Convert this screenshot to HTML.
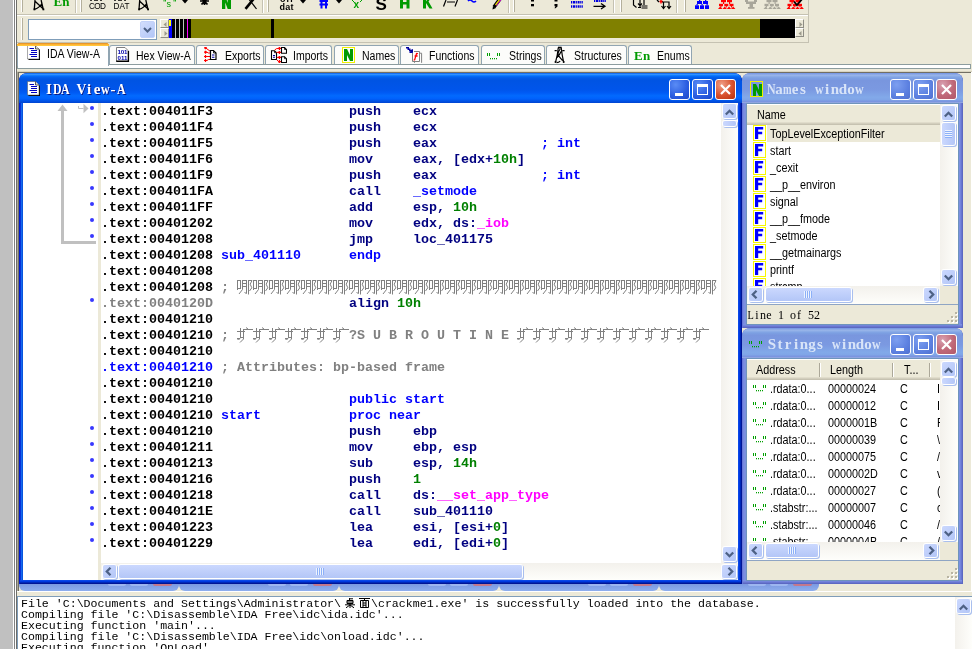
<!DOCTYPE html>
<html><head><meta charset="utf-8"><title>IDA</title>
<style>
*{box-sizing:border-box;margin:0;padding:0}
html,body{width:972px;height:649px;overflow:hidden;background:#ece9d8;font-family:"Liberation Sans",sans-serif;font-size:11px;color:#000}
div,span,svg{position:absolute}
.m{font-family:"Liberation Mono",monospace;font-weight:bold;font-size:13.33px;line-height:16px;white-space:pre;height:16px}
.nv{color:#000080}.bl{color:#0000ff}.gn{color:#008000}.mg{color:#ff00ff}.gy{color:#808080}.bk{color:#000}
.tb{height:22px;line-height:22px;white-space:pre;font-size:11px}
.tab{top:45px;height:19px;padding-top:0;background:#fcfcfa;border:1px solid #91a5b2;border-bottom:none;border-radius:3px 3px 0 0;font-size:11px;line-height:18px;white-space:pre}
.tab i{position:absolute;font-style:normal;top:1px;font-size:12px;transform:scaleX(.875);transform-origin:0 0}
.win{border-radius:8px 8px 0 0}
.tbtn{width:21px;height:21px;border:1px solid #fff;border-radius:3px}
.sbtn{width:16px;height:16px;border:1px solid #fff;border-radius:3px;background:linear-gradient(135deg,#cfdcfd,#b4c8f8);box-shadow:inset 0 0 0 1px #b7caf5}
.thumb{border:1px solid #fff;border-radius:3px;background:linear-gradient(180deg,#cad8fd,#bccdfb);box-shadow:inset 0 0 0 1px #b7caf5}
.thumbv{border:1px solid #fff;border-radius:3px;background:linear-gradient(90deg,#cad8fd,#bccdfb);box-shadow:inset 0 0 0 1px #b7caf5}
.trackv{background:linear-gradient(90deg,#f3f1ec,#fefefb)}
.trackh{background:linear-gradient(180deg,#f3f1ec,#fefefb)}
.lst{font-size:12px;line-height:17px;height:17px;margin-top:1px;white-space:pre;transform:scaleX(.9);transform-origin:0 0}
.hd{font-size:12px;line-height:20px;white-space:pre;transform:scaleX(.9);transform-origin:0 0}
.out{font-family:"Liberation Mono",monospace;font-size:11.6px;line-height:11px;height:11px;white-space:pre;color:#000}
</style></head>
<body>
<div id="root" style="left:0;top:0;width:972px;height:649px;will-change:transform">
<div style="left:0px;top:0px;width:13px;height:649px;background:#c0c0c0"></div>
<div style="left:13px;top:0px;width:1px;height:649px;background:#fff"></div>
<div style="left:14px;top:0px;width:1px;height:649px;background:#808080"></div>
<div style="left:15px;top:0px;width:1px;height:649px;background:#fff"></div>
<div style="left:16px;top:0px;width:1px;height:649px;background:#6e6e6a"></div>
<div style="left:17px;top:14px;width:791px;height:1px;background:#c5c2b2"></div>
<div style="left:17px;top:15px;width:791px;height:1px;background:#fff"></div>
<div style="left:17px;top:42px;width:791px;height:1px;background:#c5c2b2"></div>
<div style="left:808px;top:0px;width:1px;height:43px;background:#c5c2b2"></div>
<div style="left:28px;top:19px;width:129px;height:21px;background:#fff;border:1px solid #7f9db9"></div>
<div style="left:140px;top:21px;width:15px;height:17px;border-radius:2px;background:linear-gradient(135deg,#d3defc,#b2c6f7);border:1px solid #c3d2f9"><svg style="left:2px;top:4.5px" width="9" height="6" viewBox="0 0 9 6"><path d="M1 1 L4.5 4.5 L8 1" fill="none" stroke="#4d6185" stroke-width="2"/></svg></div>
<div style="left:160px;top:19px;width:9px;height:9px;background:#ece9d8;border:1px solid #fff;border-right-color:#8e8d84;border-bottom-color:#8e8d84"><svg style="left:1.5px;top:1.5px" width="4" height="5" viewBox="0 0 4 5"><path d="M3.5 0 L0.5 2.5 L3.5 5 Z" fill="#9c9a8c"/></svg></div>
<div style="left:160px;top:28px;width:9px;height:10px;background:#ece9d8;border:1px solid #fff;border-right-color:#8e8d84;border-bottom-color:#8e8d84"><svg style="left:2.5px;top:1.5px" width="4" height="5" viewBox="0 0 4 5"><path d="M0.5 0 L3.5 2.5 L0.5 5 Z" fill="#9c9a8c"/></svg></div>
<div style="left:169px;top:19px;width:626px;height:19px;background:#808000"></div>
<div style="left:169px;top:19px;width:3px;height:19px;background:#0000ff"></div>
<div style="left:169px;top:20px;width:2px;height:6px;background:#ffff00"></div>
<div style="left:172px;top:19px;width:19px;height:19px;background:#000"></div>
<div style="left:175px;top:19px;width:1px;height:19px;background:#c0c0c0"></div>
<div style="left:179px;top:19px;width:1px;height:19px;background:#c0c0c0"></div>
<div style="left:183px;top:19px;width:1px;height:19px;background:#c0c0c0"></div>
<div style="left:187px;top:19px;width:1px;height:19px;background:#ff00ff"></div>
<div style="left:271px;top:19px;width:3px;height:19px;background:#000"></div>
<div style="left:760px;top:19px;width:35px;height:19px;background:#000"></div>
<div style="left:795px;top:19px;width:9px;height:9px;background:#ece9d8;border:1px solid #fff;border-right-color:#8e8d84;border-bottom-color:#8e8d84"><svg style="left:2.5px;top:1.5px" width="4" height="5" viewBox="0 0 4 5"><path d="M0.5 0 L3.5 2.5 L0.5 5 Z" fill="#9c9a8c"/></svg></div>
<div style="left:795px;top:28px;width:9px;height:9px;background:#ece9d8;border:1px solid #fff;border-right-color:#8e8d84;border-bottom-color:#8e8d84"><svg style="left:1.5px;top:1.5px" width="4" height="5" viewBox="0 0 4 5"><path d="M3.5 0 L0.5 2.5 L3.5 5 Z" fill="#9c9a8c"/></svg></div>
<div style="left:17px;top:64px;width:954px;height:5px;background:#fff;border:1px solid #8c9c9e"></div>
<div class="tab" style="left:109px;width:86px"><svg style="left:6px;top:1px" width="15" height="16" viewBox="0 0 15 16"><path d="M0.5 0.5 H9 L12.5 4 V14 H0.5 Z" fill="#fff"/><path d="M0.5 14 V0.5 H9 L12.5 4" fill="none" stroke="#707070" stroke-width="0.9"/><path d="M12.4 4 V14.3 H0.2" fill="none" stroke="#000" stroke-width="1.4"/><text x="1.6" y="7" font-family="Liberation Sans" font-weight="bold" font-size="6.2" fill="#0000a8" textLength="9.8">101</text><text x="1.6" y="12.8" font-family="Liberation Sans" font-weight="bold" font-size="6.2" fill="#0000a8" textLength="9.8">011</text></svg><i style="left:25.5px">Hex View-A</i></div>
<div class="tab" style="left:196px;width:68px"><svg style="left:7px;top:1px" width="14" height="16" viewBox="0 0 14 16"><g stroke="#ff0000" stroke-width="1" fill="none"><path d="M1.5 0.8 L6.5 4.5 M1.5 5.2 H3 L4.5 6 H6.5 M1.5 9.5 H6.5 M1.5 13.5 H3 L4.5 12.5 H6.5"/><path d="M0 0.8 H3 M1.5 -0.7 V2.3 M0 5.2 H3 M1.5 3.7 V6.7 M0 9.5 H3 M1.5 8 V11 M0 13.5 H3 M1.5 12 V15" stroke-width="1.2"/></g><path d="M6.5 3.5 H9.5 L12 6 V12.5 H6.5 Z" fill="#fff" stroke="#000" stroke-width="1.2"/><path d="M9.5 3.5 V6 H12" fill="none" stroke="#000" stroke-width="0.8"/><path d="M8 8 h2.5 M8 10.3 h2.5" stroke="#0000a0" stroke-width="1.1"/></svg><i style="left:27.5px">Exports</i></div>
<div class="tab" style="left:265px;width:67px"><svg style="left:4px;top:1px" width="17" height="17" viewBox="0 0 17 17"><path d="M1.5 3.7 H4.5 L6.5 5.7 V12.5 H1.5 Z" fill="#fff" stroke="#000" stroke-width="1.1"/><path d="M4.5 3.7 V5.7 H6.5" fill="none" stroke="#000" stroke-width="0.8"/><path d="M3 8.5 h2 M3 10.3 h2" stroke="#0000a0" stroke-width="1.1"/><g stroke="#ff0000" fill="none"><path d="M4.5 3.2 L6.5 1.6 L11 1.4 M6.5 5.4 H11 M6.8 10.4 H11 M6.8 12.8 L8.5 14.6 H11" stroke-width="1"/><path d="M9.4 -0.2 V3 M8 1.4 H10.8 M9.4 3.9 V6.9 M8 5.4 H10.8 M9.4 8.9 V11.9 M8 10.4 H10.8 M9.4 13.1 V16.1 M8 14.6 H10.8" stroke-width="1.2"/></g><path d="M11.5 0.5 H14.5 L16.5 2.5 V6.3 H11.5 Z" fill="#fff" stroke="#000" stroke-width="1.1"/><path d="M14.5 0.5 V2.5 H16.5" fill="none" stroke="#000" stroke-width="0.8"/><path d="M11.5 9.7 H14.5 L16.5 11.7 V15.5 H11.5 Z" fill="#fff" stroke="#000" stroke-width="1.1"/><path d="M14.5 9.7 V11.7 H16.5" fill="none" stroke="#000" stroke-width="0.8"/></svg><i style="left:27px">Imports</i></div>
<div class="tab" style="left:333.5px;width:65px"><svg style="left:7px;top:1px" width="13" height="16" viewBox="0 0 13 16"><rect x="0.5" y="0.5" width="12" height="15" fill="none" stroke="#f0f000" stroke-width="1"/><path d="M2 2 H5 L8 8 V2 H11 V14 H8 L5 8 V14 H2 Z" fill="#009a00"/></svg><i style="left:27px">Names</i></div>
<div class="tab" style="left:400px;width:79px"><svg style="left:4px;top:0px" width="18" height="18" viewBox="0 0 18 18"><path d="M1 1 H4 V2.5 H5.5 V4 L8 3 V7 H4 L5.5 5.5 H4 V4 H2.5 V2.5 H1 Z" fill="#0000a0"/><path d="M14.8 7.2 H16.6 V16.8 M9.5 15.6 V16.8" fill="none" stroke="#808080" stroke-width="1"/><path d="M7.5 7 V15.5 H14.5 V5.5 H9" fill="#fff" stroke="#808080" stroke-width="1"/><path d="M12.8 8 Q11.6 6.6 11.2 8.6 L9.8 13.4 Q9.4 14.4 8.8 13.6 M9.6 10 H12.6" fill="none" stroke="#ff0000" stroke-width="1.3"/></svg><i style="left:27.5px">Functions</i></div>
<div class="tab" style="left:480.5px;width:64px"><svg style="left:5px;top:7px" width="15" height="7" viewBox="0 0 15 7"><g fill="#00a000"><rect x="0" y="0" width="1" height="3"/><rect x="2" y="0" width="1" height="3"/><rect x="10" y="0" width="1" height="3"/><rect x="12" y="0" width="1" height="3"/><rect x="3" y="5" width="1" height="1.3"/><rect x="5" y="5" width="1" height="1.3"/><rect x="7" y="5" width="1" height="1.3"/><rect x="9" y="5" width="1" height="1.3"/></g></svg><i style="left:27.2px">Strings</i></div>
<div class="tab" style="left:546px;width:81px"><svg style="left:7px;top:0px" width="12" height="18" viewBox="0 0 12 18"><g fill="none" stroke="#000" stroke-width="1.2"><path d="M4 1.6 H7.6" stroke-width="1.8"/><path d="M0.6 4.6 H2.8 M8.4 4.6 H10.6 M4.3 1.5 Q3.6 9 1.6 16 M7.2 1.5 Q8 9 9.6 16 M6.2 3 Q3.4 7 4.2 9.5 L8.6 14.6 M7 5.5 Q6 8.5 3 11.5 M2.6 16.6 Q4.8 16.6 6.2 15.2"/></g><circle cx="1.5" cy="16.1" r="1"/><circle cx="9.7" cy="16.1" r="1"/></svg><i style="left:27.4px">Structures</i></div>
<div class="tab" style="left:628px;width:64px"><span style="left:5px;top:1px;font-family:'Liberation Serif',serif;font-weight:bold;font-size:13px;line-height:18px;color:#009a00;letter-spacing:0.3px">En</span><i style="left:27.7px">Enums</i></div>
<div class="tab" style="left:17px;top:43px;width:92px;height:23px;background:#fff;border-top:3px solid #ffb834"><svg style="left:9px;top:-1.5px" width="14" height="16" viewBox="0 0 14 16"><path d="M1.5 1.5 H9.5 L13 5 V15 H1.5 Z" fill="#000"/><path d="M0.5 0.5 H8.5 L12 4 V14 H0.5 Z" fill="#fff" stroke="#000" stroke-width="0"/><path d="M0.5 0.5 H8.5 L12 4 V14 H0.5 Z" fill="none" stroke="#555" stroke-width="0.5"/><path d="M8.5 0.5 V4 H12" fill="#ddd" stroke="#000" stroke-width="0.6"/><path d="M2.5 3.5 H7 M4 5.5 H10 M4 7.5 H10 M2.5 9.5 H10 M4 11.5 H10" stroke="#0000c0" stroke-width="1"/></svg><i style="left:29px;top:-1px">IDA View-A</i></div>
<div style="left:18px;top:43px;width:90px;height:1px;background:#e5972d;border-radius:2px 2px 0 0"></div>
<div style="left:17px;top:44px;width:92px;height:1px;background:#ffb232"></div>
<div style="left:17px;top:45px;width:92px;height:1px;background:#ffc73c"></div>
<div style="left:21px;top:18px;width:1px;height:22px;background:#fff"></div>
<div style="left:22px;top:18px;width:1px;height:22px;background:#b4b09c"></div>
<div style="left:17px;top:71px;width:955px;height:1px;background:#d8d4c0"></div>
<div style="left:17px;top:72px;width:954px;height:1px;background:#716f64"></div>
<div style="left:17px;top:72px;width:1px;height:520px;background:#aca899"></div>
<div style="left:18px;top:72px;width:1px;height:519px;background:#716f64"></div>
<div style="left:971px;top:72px;width:1px;height:520px;background:#fff"></div>
<div class="win" style="left:19px;top:73px;width:723px;height:511px;background:#0831d9;overflow:hidden">
<div style="left:0;top:0;width:4px;height:511px;background:linear-gradient(90deg,#0019cf 0%,#0019cf 25%,#0831d9 25%,#0831d9 50%,#166aee 50%,#166aee 75%,#0855dd 75%,#0855dd 100%)"></div>
<div style="left:719px;top:0;width:4px;height:511px;background:linear-gradient(90deg,#0a48e8 0%,#0a48e8 25%,#0038e0 25%,#0038e0 50%,#0028b8 50%,#0028b8 75%,#001496 75%,#001496 100%)"></div>
<div style="left:1px;top:507px;width:721px;height:4px;background:linear-gradient(180deg,#0a48e8 0%,#0a48e8 25%,#0038e0 25%,#0038e0 50%,#0028b8 50%,#0028b8 75%,#001496 75%,#001496 100%)"></div>
<div style="left:0;top:0;width:723px;height:30px;border-radius:8px 8px 0 0;background:linear-gradient(180deg,#0058ee 0%,#3593ff 4%,#288eff 6%,#127dff 8%,#036ffc 10%,#0262ee 14%,#0057e5 20%,#0054e3 24%,#0055eb 56%,#005bf5 66%,#026afe 76%,#0061fc 86%,#0144d0 100%)"></div>
</div>
<div class="win" style="left:742px;top:73px;width:221px;height:255px;background:#6a7fd6;overflow:hidden">
<div style="left:0;top:0;width:4px;height:255px;background:linear-gradient(90deg,#6878d8 0%,#6878d8 25%,#7888e0 25%,#7888e0 50%,#7b8fe0 50%,#7b8fe0 75%,#7a8fdf 75%,#7a8fdf 100%)"></div>
<div style="left:217px;top:0;width:4px;height:255px;background:linear-gradient(90deg,#7b90e2 0%,#7b90e2 25%,#7484dc 25%,#7484dc 50%,#6876d0 50%,#6876d0 75%,#5c68c2 75%,#5c68c2 100%)"></div>
<div style="left:1px;top:251px;width:219px;height:4px;background:linear-gradient(180deg,#7b90e2 0%,#7b90e2 25%,#7484dc 25%,#7484dc 50%,#6876d0 50%,#6876d0 75%,#5c68c2 75%,#5c68c2 100%)"></div>
<div style="left:0;top:0;width:221px;height:30px;border-radius:8px 8px 0 0;background:linear-gradient(180deg,#7697e7 0%,#7e9ee3 3%,#94afe8 6%,#97b4e9 8%,#82a5e4 14%,#7c9fe2 17%,#7996de 25%,#7b99e1 56%,#82a9e9 81%,#80a5e7 89%,#7b96e1 94%,#7a93df 97%,#abbae3 100%)"></div>
</div>
<div class="win" style="left:742px;top:328px;width:221px;height:256px;background:#6a7fd6;overflow:hidden">
<div style="left:0;top:0;width:4px;height:256px;background:linear-gradient(90deg,#6878d8 0%,#6878d8 25%,#7888e0 25%,#7888e0 50%,#7b8fe0 50%,#7b8fe0 75%,#7a8fdf 75%,#7a8fdf 100%)"></div>
<div style="left:217px;top:0;width:4px;height:256px;background:linear-gradient(90deg,#7b90e2 0%,#7b90e2 25%,#7484dc 25%,#7484dc 50%,#6876d0 50%,#6876d0 75%,#5c68c2 75%,#5c68c2 100%)"></div>
<div style="left:1px;top:252px;width:219px;height:4px;background:linear-gradient(180deg,#7b90e2 0%,#7b90e2 25%,#7484dc 25%,#7484dc 50%,#6876d0 50%,#6876d0 75%,#5c68c2 75%,#5c68c2 100%)"></div>
<div style="left:0;top:0;width:221px;height:30px;border-radius:8px 8px 0 0;background:linear-gradient(180deg,#7697e7 0%,#7e9ee3 3%,#94afe8 6%,#97b4e9 8%,#82a5e4 14%,#7c9fe2 17%,#7996de 25%,#7b99e1 56%,#82a9e9 81%,#80a5e7 89%,#7b96e1 94%,#7a93df 97%,#abbae3 100%)"></div>
</div>
<div style="left:23px;top:103px;width:715px;height:477px;background:#fff"></div>
<div style="left:98px;top:103px;width:3px;height:477px;background:#ece9d8"></div>
<div class="tbtn" style="left:669px;top:79px;width:21px;height:21px;background:radial-gradient(circle at 30% 25%,#5a8cf5 0%,#2a5ce0 60%,#1d47c8 100%)"><div style="left:5px;top:13px;width:8px;height:3px;background:#fff"></div></div>
<div class="tbtn" style="left:692px;top:79px;width:21px;height:21px;background:radial-gradient(circle at 30% 25%,#5a8cf5 0%,#2a5ce0 60%,#1d47c8 100%)"><div style="left:4px;top:4px;width:11px;height:11px;border:1px solid #fff;border-top-width:3px"></div></div>
<div class="tbtn" style="left:715px;top:79px;width:21px;height:21px;background:radial-gradient(circle at 30% 25%,#f0a088 0%,#d8502c 55%,#b8300c 100%)"><svg style="left:4px;top:4px" width="11" height="11" viewBox="0 0 11 11"><path d="M1 1 L10 10 M10 1 L1 10" stroke="#fff" stroke-width="2.2" fill="none"/></svg></div>
<div style="left:45px;top:80px;width:80px;height:18px;font-family:'Liberation Serif',serif;font-weight:bold;font-size:15px;line-height:18px;color:#fff;text-shadow:1px 1px 0 #0a1883;white-space:pre">
<span style="left:1.08px;top:0;width:5.84px;">I</span>
<span style="left:6.58px;top:0;width:10.84px;transform:scaleX(0.793);transform-origin:50% 50%;">D</span>
<span style="left:14.58px;top:0;width:10.84px;transform:scaleX(0.793);transform-origin:50% 50%;">A</span>
<span style="left:31.27px;top:0;width:9.47px;transform:scaleX(0.908);transform-origin:50% 50%;">V</span>
<span style="left:41.91px;top:0;width:4.17px;">i</span>
<span style="left:48.66px;top:0;width:6.67px;">e</span>
<span style="left:54.58px;top:0;width:10.84px;transform:scaleX(0.793);transform-origin:50% 50%;">w</span>
<span style="left:65.50px;top:0;width:5px;">-</span>
<span style="left:70.58px;top:0;width:10.84px;transform:scaleX(0.793);transform-origin:50% 50%;">A</span>
</div>
<div class="trackv" style="left:721px;top:103px;width:17px;height:460px;"></div>
<div style="left:723px;top:104px;width:13px;height:13.5px;border-radius:2px;background:linear-gradient(135deg,#cbd8fe,#b3c6f7);box-shadow:0 0 0 1px #fff,1px 1px 0 1px #a9bfee"><svg style="left:2px;top:4.5px" width="9" height="7" viewBox="0 0 9 7"><path d="M0.8 5.5 L4.5 1.8 L8.2 5.5" fill="none" stroke="#4d6185" stroke-width="2.3"/></svg></div>
<div style="left:723px;top:547px;width:13px;height:13.5px;border-radius:2px;background:linear-gradient(135deg,#cbd8fe,#b3c6f7);box-shadow:0 0 0 1px #fff,1px 1px 0 1px #a9bfee"><svg style="left:2px;top:3.5px" width="9" height="7" viewBox="0 0 9 7"><path d="M0.8 1.5 L4.5 5.2 L8.2 1.5" fill="none" stroke="#4d6185" stroke-width="2.3"/></svg></div>
<div style="left:723px;top:121px;width:13px;height:5px;border-radius:2px;background:linear-gradient(90deg,#cbd8fe,#b3c6f7);box-shadow:0 0 0 1px #fff,1px 1px 0 1px #a9bfee"></div>
<div class="trackh" style="left:101px;top:563px;width:637px;height:17px;"></div>
<div style="left:102.5px;top:565px;width:13.5px;height:13px;border-radius:2px;background:linear-gradient(135deg,#cbd8fe,#b3c6f7);box-shadow:0 0 0 1px #fff,1px 1px 0 1px #a9bfee"><svg style="left:2.5px;top:2px" width="7" height="9" viewBox="0 0 7 9"><path d="M5.5 0.8 L1.8 4.5 L5.5 8.2" fill="none" stroke="#4d6185" stroke-width="2.3"/></svg></div>
<div style="left:722.0px;top:565px;width:13.5px;height:13px;border-radius:2px;background:linear-gradient(135deg,#cbd8fe,#b3c6f7);box-shadow:0 0 0 1px #fff,1px 1px 0 1px #a9bfee"><svg style="left:4.5px;top:2px" width="7" height="9" viewBox="0 0 7 9"><path d="M1.5 0.8 L5.2 4.5 L1.5 8.2" fill="none" stroke="#4d6185" stroke-width="2.3"/></svg></div>
<div style="left:119px;top:565px;width:403px;height:13px;border-radius:2px;background:linear-gradient(180deg,#cbd8fe,#b3c6f7);box-shadow:0 0 0 1px #fff,1px 1px 0 1px #a9bfee"><div style="left:197px;top:3px;width:8px;height:7px;background:repeating-linear-gradient(90deg,#eef3fe 0,#eef3fe 1px,#8cb0f8 1px,#8cb0f8 2px)"></div></div>
<span class="m bk" style="left:101px;top:104px">.text:004011F3</span>
<span class="m nv" style="left:349px;top:104px">push</span>
<span class="m nv" style="left:413px;top:104px">ecx</span>
<div style="left:90px;top:106px;width:4px;height:4px;background:#3838ff;border-radius:50%"></div>
<span class="m bk" style="left:101px;top:120px">.text:004011F4</span>
<span class="m nv" style="left:349px;top:120px">push</span>
<span class="m nv" style="left:413px;top:120px">ecx</span>
<div style="left:90px;top:122px;width:4px;height:4px;background:#3838ff;border-radius:50%"></div>
<span class="m bk" style="left:101px;top:136px">.text:004011F5</span>
<span class="m nv" style="left:349px;top:136px">push</span>
<span class="m nv" style="left:413px;top:136px">eax</span>
<span class="m bl" style="left:541px;top:136px">; int</span>
<div style="left:90px;top:138px;width:4px;height:4px;background:#3838ff;border-radius:50%"></div>
<span class="m bk" style="left:101px;top:152px">.text:004011F6</span>
<span class="m nv" style="left:349px;top:152px">mov</span>
<span class="m nv" style="left:413px;top:152px">eax, [edx+</span>
<span class="m gn" style="left:493px;top:152px">10h</span>
<span class="m nv" style="left:517px;top:152px">]</span>
<div style="left:90px;top:154px;width:4px;height:4px;background:#3838ff;border-radius:50%"></div>
<span class="m bk" style="left:101px;top:168px">.text:004011F9</span>
<span class="m nv" style="left:349px;top:168px">push</span>
<span class="m nv" style="left:413px;top:168px">eax</span>
<span class="m bl" style="left:541px;top:168px">; int</span>
<div style="left:90px;top:170px;width:4px;height:4px;background:#3838ff;border-radius:50%"></div>
<span class="m bk" style="left:101px;top:184px">.text:004011FA</span>
<span class="m nv" style="left:349px;top:184px">call</span>
<span class="m bl" style="left:413px;top:184px">_setmode</span>
<div style="left:90px;top:186px;width:4px;height:4px;background:#3838ff;border-radius:50%"></div>
<span class="m bk" style="left:101px;top:200px">.text:004011FF</span>
<span class="m nv" style="left:349px;top:200px">add</span>
<span class="m nv" style="left:413px;top:200px">esp, </span>
<span class="m gn" style="left:453px;top:200px">10h</span>
<div style="left:90px;top:202px;width:4px;height:4px;background:#3838ff;border-radius:50%"></div>
<span class="m bk" style="left:101px;top:216px">.text:00401202</span>
<span class="m nv" style="left:349px;top:216px">mov</span>
<span class="m nv" style="left:413px;top:216px">edx, ds:</span>
<span class="m mg" style="left:477px;top:216px">_iob</span>
<div style="left:90px;top:218px;width:4px;height:4px;background:#3838ff;border-radius:50%"></div>
<span class="m bk" style="left:101px;top:232px">.text:00401208</span>
<span class="m nv" style="left:349px;top:232px">jmp</span>
<span class="m nv" style="left:413px;top:232px">loc_401175</span>
<div style="left:90px;top:234px;width:4px;height:4px;background:#3838ff;border-radius:50%"></div>
<span class="m bk" style="left:101px;top:248px">.text:00401208</span>
<span class="m bl" style="left:221px;top:248px">sub_401110</span>
<span class="m bl" style="left:349px;top:248px">endp</span>
<span class="m bk" style="left:101px;top:264px">.text:00401208</span>
<span class="m bk" style="left:101px;top:280px">.text:00401208</span>
<span class="m gy" style="left:221px;top:280px">;</span>
<span class="m gy" style="left:101px;top:296px">.text:0040120D</span>
<span class="m nv" style="left:349px;top:296px">align </span>
<span class="m gn" style="left:397px;top:296px">10h</span>
<div style="left:90px;top:298px;width:4px;height:4px;background:#3838ff;border-radius:50%"></div>
<span class="m bk" style="left:101px;top:312px">.text:00401210</span>
<span class="m bk" style="left:101px;top:328px">.text:00401210</span>
<span class="m gy" style="left:221px;top:328px">;</span>
<span class="m gy" style="left:349px;top:328px">?S U B R O U T I N E</span>
<span class="m bk" style="left:101px;top:344px">.text:00401210</span>
<span class="m bl" style="left:101px;top:360px">.text:00401210</span>
<span class="m gy" style="left:221px;top:360px">; Attributes: bp-based frame</span>
<span class="m bk" style="left:101px;top:376px">.text:00401210</span>
<span class="m bk" style="left:101px;top:392px">.text:00401210</span>
<span class="m bl" style="left:349px;top:392px">public start</span>
<span class="m bk" style="left:101px;top:408px">.text:00401210</span>
<span class="m bl" style="left:221px;top:408px">start</span>
<span class="m bl" style="left:349px;top:408px">proc near</span>
<span class="m bk" style="left:101px;top:424px">.text:00401210</span>
<span class="m nv" style="left:349px;top:424px">push</span>
<span class="m nv" style="left:413px;top:424px">ebp</span>
<div style="left:90px;top:426px;width:4px;height:4px;background:#3838ff;border-radius:50%"></div>
<span class="m bk" style="left:101px;top:440px">.text:00401211</span>
<span class="m nv" style="left:349px;top:440px">mov</span>
<span class="m nv" style="left:413px;top:440px">ebp, esp</span>
<div style="left:90px;top:442px;width:4px;height:4px;background:#3838ff;border-radius:50%"></div>
<span class="m bk" style="left:101px;top:456px">.text:00401213</span>
<span class="m nv" style="left:349px;top:456px">sub</span>
<span class="m nv" style="left:413px;top:456px">esp, </span>
<span class="m gn" style="left:453px;top:456px">14h</span>
<div style="left:90px;top:458px;width:4px;height:4px;background:#3838ff;border-radius:50%"></div>
<span class="m bk" style="left:101px;top:472px">.text:00401216</span>
<span class="m nv" style="left:349px;top:472px">push</span>
<span class="m gn" style="left:413px;top:472px">1</span>
<div style="left:90px;top:474px;width:4px;height:4px;background:#3838ff;border-radius:50%"></div>
<span class="m bk" style="left:101px;top:488px">.text:00401218</span>
<span class="m nv" style="left:349px;top:488px">call</span>
<span class="m nv" style="left:413px;top:488px">ds:</span>
<span class="m mg" style="left:437px;top:488px">__set_app_type</span>
<div style="left:90px;top:490px;width:4px;height:4px;background:#3838ff;border-radius:50%"></div>
<span class="m bk" style="left:101px;top:504px">.text:0040121E</span>
<span class="m nv" style="left:349px;top:504px">call</span>
<span class="m nv" style="left:413px;top:504px">sub_401110</span>
<div style="left:90px;top:506px;width:4px;height:4px;background:#3838ff;border-radius:50%"></div>
<span class="m bk" style="left:101px;top:520px">.text:00401223</span>
<span class="m nv" style="left:349px;top:520px">lea</span>
<span class="m nv" style="left:413px;top:520px">esi, [esi+</span>
<span class="m gn" style="left:493px;top:520px">0</span>
<span class="m nv" style="left:501px;top:520px">]</span>
<div style="left:90px;top:522px;width:4px;height:4px;background:#3838ff;border-radius:50%"></div>
<span class="m bk" style="left:101px;top:536px">.text:00401229</span>
<span class="m nv" style="left:349px;top:536px">lea</span>
<span class="m nv" style="left:413px;top:536px">edi, [edi+</span>
<span class="m gn" style="left:493px;top:536px">0</span>
<span class="m nv" style="left:501px;top:536px">]</span>
<div style="left:90px;top:538px;width:4px;height:4px;background:#3838ff;border-radius:50%"></div>
<svg style="left:0;top:0" width="0" height="0"><defs><pattern id="pna" width="16" height="16" patternUnits="userSpaceOnUse"><g fill="none" stroke="#808080" stroke-width="1"><path d="M0.5 1 V11 M3.5 1 V10 M0 1.5 H4 M0 9.5 H4 M5.5 1 V10.5 L2 15 M9.5 1 V14.5 L7.5 13.5 M5 1.5 H10 M5 4.5 H10 M5 7.5 H10 M11.5 1 V15.5 M11 1.5 H15 L13.2 5.2 L14.8 8.8 L12.5 12" /></g></pattern><pattern id="pku" width="16" height="16" patternUnits="userSpaceOnUse"><g fill="none" stroke="#808080" stroke-width="1"><path d="M0 4.5 H8 M3.5 1 V11 M6.5 2 V12 M3 10.5 H7 M6 2.5 H16 M9 0.5 L11 2 M0 11.5 H3 L1.5 13 Z M6.5 12 L3 15.5" /></g></pattern></defs></svg>
<svg style="left:237px;top:279px" width="480" height="16"><rect width="480" height="16" fill="url(#pna)"/></svg>
<svg style="left:237px;top:327px" width="112" height="16"><rect width="112" height="16" fill="url(#pku)"/></svg>
<svg style="left:517px;top:327px" width="192" height="16"><rect width="192" height="16" fill="url(#pku)"/></svg>
<div style="left:61px;top:110px;width:3px;height:134px;background:#c0c0c0"></div>
<div style="left:61px;top:241px;width:35px;height:3px;background:#c0c0c0"></div>
<svg style="left:56px;top:104px" width="13" height="8" viewBox="0 0 13 8"><path d="M6.5 0.5 L11.5 7 L1.5 7 Z" fill="#c0c0c0"/></svg>
<svg style="left:77px;top:103px" width="12" height="11" viewBox="0 0 12 11"><path d="M6.5 0.8 L11.5 5.5 L6.5 10.2 Z" fill="#c0c0c0"/><path d="M1.5 3 V5.5 H6.5" stroke="#c0c0c0" stroke-width="1" fill="none"/></svg>
<svg style="left:27px;top:81px" width="14" height="16" viewBox="0 0 14 16"><path d="M1.5 1.5 H9.5 L13 5 V15 H1.5 Z" fill="#000"/><path d="M0.5 0.5 H8.5 L12 4 V14 H0.5 Z" fill="#fff" stroke="#000" stroke-width="0"/><path d="M0.5 0.5 H8.5 L12 4 V14 H0.5 Z" fill="none" stroke="#555" stroke-width="0.5"/><path d="M8.5 0.5 V4 H12" fill="#ddd" stroke="#000" stroke-width="0.6"/><path d="M2.5 3.5 H7 M4 5.5 H10 M4 7.5 H10 M2.5 9.5 H10 M4 11.5 H10" stroke="#0000c0" stroke-width="1"/></svg>
<div style="left:746px;top:103px;width:213px;height:222px;background:#6f94bc"></div>
<div style="left:747px;top:104px;width:211px;height:220px;background:#fff"></div>
<div class="tbtn" style="left:890px;top:79px;width:21px;height:21px;background:radial-gradient(circle at 30% 25%,#7d9ff0 0%,#5c80e0 60%,#5070d0 100%)"><div style="left:5px;top:13px;width:8px;height:3px;background:#fff"></div></div>
<div class="tbtn" style="left:913px;top:79px;width:21px;height:21px;background:radial-gradient(circle at 30% 25%,#7d9ff0 0%,#5c80e0 60%,#5070d0 100%)"><div style="left:4px;top:4px;width:11px;height:11px;border:1px solid #fff;border-top-width:3px"></div></div>
<div class="tbtn" style="left:936px;top:79px;width:21px;height:21px;background:radial-gradient(circle at 30% 25%,#d8a0b0 0%,#c06878 55%,#b05868 100%)"><svg style="left:4px;top:4px" width="11" height="11" viewBox="0 0 11 11"><path d="M1 1 L10 10 M10 1 L1 10" stroke="#fff" stroke-width="2.2" fill="none"/></svg></div>
<div style="left:767px;top:80px;width:96px;height:18px;font-family:'Liberation Serif',serif;font-weight:bold;font-size:15px;line-height:18px;color:#d8e4f8;white-space:pre">
<span style="left:-1.42px;top:0;width:10.84px;transform:scaleX(0.793);transform-origin:50% 50%;">N</span>
<span style="left:8.25px;top:0;width:7.5px;">a</span>
<span style="left:13.75px;top:0;width:12.5px;transform:scaleX(0.688);transform-origin:50% 50%;">m</span>
<span style="left:24.66px;top:0;width:6.67px;">e</span>
<span style="left:33.08px;top:0;width:5.84px;">s</span>
<span style="left:46.58px;top:0;width:10.84px;transform:scaleX(0.793);transform-origin:50% 50%;">w</span>
<span style="left:57.91px;top:0;width:4.17px;">i</span>
<span style="left:63.83px;top:0;width:8.34px;">n</span>
<span style="left:71.83px;top:0;width:8.34px;">d</span>
<span style="left:80.25px;top:0;width:7.5px;">o</span>
<span style="left:86.58px;top:0;width:10.84px;transform:scaleX(0.793);transform-origin:50% 50%;">w</span>
</div>
<div style="left:750px;top:81px;width:13px;height:16px;border:1px solid #f0f000"><svg style="left:1px;top:1px" width="11" height="14" viewBox="0 0 11 14"><path d="M1 1 H4 L7 7 V1 H10 V13 H7 L4 7 V13 H1 Z" fill="#009a00"/></svg></div>
<div style="left:747px;top:105px;width:194px;height:20px;background:linear-gradient(180deg,#ece9d8 0,#ece9d8 85%,#e0dccb 85%,#e0dccb 90%,#d2cebd 90%,#d2cebd 95%,#c6c2b1 95%)"><span class="hd" style="left:10px;top:0px">Name</span></div>
<div style="left:747px;top:125px;width:193px;height:161px;overflow:hidden">
<div style="left:20px;top:0px;width:173px;height:17px;background:#ece9d8"></div>
<div style="left:6px;top:0px;width:13px;height:16px;background:#fff;border:1px solid #f8f800"><svg style="left:0;top:0" width="11" height="14" viewBox="0 0 11 14"><path d="M1 1 H9.2 V3.6 H4.2 V5.8 H8.2 V8.3 H4.2 V13 H1 Z" fill="#0000ff"/></svg></div>
<span class="lst" style="left:23px;top:0px">TopLevelExceptionFilter</span>
<div style="left:6px;top:17px;width:13px;height:16px;background:#fff;border:1px solid #f8f800"><svg style="left:0;top:0" width="11" height="14" viewBox="0 0 11 14"><path d="M1 1 H9.2 V3.6 H4.2 V5.8 H8.2 V8.3 H4.2 V13 H1 Z" fill="#0000ff"/></svg></div>
<span class="lst" style="left:23px;top:17px">start</span>
<div style="left:6px;top:34px;width:13px;height:16px;background:#fff;border:1px solid #f8f800"><svg style="left:0;top:0" width="11" height="14" viewBox="0 0 11 14"><path d="M1 1 H9.2 V3.6 H4.2 V5.8 H8.2 V8.3 H4.2 V13 H1 Z" fill="#0000ff"/></svg></div>
<span class="lst" style="left:23px;top:34px">_cexit</span>
<div style="left:6px;top:51px;width:13px;height:16px;background:#fff;border:1px solid #f8f800"><svg style="left:0;top:0" width="11" height="14" viewBox="0 0 11 14"><path d="M1 1 H9.2 V3.6 H4.2 V5.8 H8.2 V8.3 H4.2 V13 H1 Z" fill="#0000ff"/></svg></div>
<span class="lst" style="left:23px;top:51px">__p__environ</span>
<div style="left:6px;top:68px;width:13px;height:16px;background:#fff;border:1px solid #f8f800"><svg style="left:0;top:0" width="11" height="14" viewBox="0 0 11 14"><path d="M1 1 H9.2 V3.6 H4.2 V5.8 H8.2 V8.3 H4.2 V13 H1 Z" fill="#0000ff"/></svg></div>
<span class="lst" style="left:23px;top:68px">signal</span>
<div style="left:6px;top:85px;width:13px;height:16px;background:#fff;border:1px solid #f8f800"><svg style="left:0;top:0" width="11" height="14" viewBox="0 0 11 14"><path d="M1 1 H9.2 V3.6 H4.2 V5.8 H8.2 V8.3 H4.2 V13 H1 Z" fill="#0000ff"/></svg></div>
<span class="lst" style="left:23px;top:85px">__p__fmode</span>
<div style="left:6px;top:102px;width:13px;height:16px;background:#fff;border:1px solid #f8f800"><svg style="left:0;top:0" width="11" height="14" viewBox="0 0 11 14"><path d="M1 1 H9.2 V3.6 H4.2 V5.8 H8.2 V8.3 H4.2 V13 H1 Z" fill="#0000ff"/></svg></div>
<span class="lst" style="left:23px;top:102px">_setmode</span>
<div style="left:6px;top:119px;width:13px;height:16px;background:#fff;border:1px solid #f8f800"><svg style="left:0;top:0" width="11" height="14" viewBox="0 0 11 14"><path d="M1 1 H9.2 V3.6 H4.2 V5.8 H8.2 V8.3 H4.2 V13 H1 Z" fill="#0000ff"/></svg></div>
<span class="lst" style="left:23px;top:119px">__getmainargs</span>
<div style="left:6px;top:136px;width:13px;height:16px;background:#fff;border:1px solid #f8f800"><svg style="left:0;top:0" width="11" height="14" viewBox="0 0 11 14"><path d="M1 1 H9.2 V3.6 H4.2 V5.8 H8.2 V8.3 H4.2 V13 H1 Z" fill="#0000ff"/></svg></div>
<span class="lst" style="left:23px;top:136px">printf</span>
<div style="left:6px;top:153px;width:13px;height:16px;background:#fff;border:1px solid #f8f800"><svg style="left:0;top:0" width="11" height="14" viewBox="0 0 11 14"><path d="M1 1 H9.2 V3.6 H4.2 V5.8 H8.2 V8.3 H4.2 V13 H1 Z" fill="#0000ff"/></svg></div>
<span class="lst" style="left:23px;top:153px">strcmp</span>
</div>
<div class="trackv" style="left:940px;top:104px;width:18px;height:183px;"></div>
<div style="left:942px;top:106px;width:13px;height:13.5px;border-radius:2px;background:linear-gradient(135deg,#cbd8fe,#b3c6f7);box-shadow:0 0 0 1px #fff,1px 1px 0 1px #a9bfee"><svg style="left:2px;top:4.5px" width="9" height="7" viewBox="0 0 9 7"><path d="M0.8 5.5 L4.5 1.8 L8.2 5.5" fill="none" stroke="#4d6185" stroke-width="2.3"/></svg></div>
<div style="left:942px;top:270px;width:13px;height:13.5px;border-radius:2px;background:linear-gradient(135deg,#cbd8fe,#b3c6f7);box-shadow:0 0 0 1px #fff,1px 1px 0 1px #a9bfee"><svg style="left:2px;top:3.5px" width="9" height="7" viewBox="0 0 9 7"><path d="M0.8 1.5 L4.5 5.2 L8.2 1.5" fill="none" stroke="#4d6185" stroke-width="2.3"/></svg></div>
<div style="left:942px;top:123px;width:13px;height:22px;border-radius:2px;background:linear-gradient(90deg,#cbd8fe,#b3c6f7);box-shadow:0 0 0 1px #fff,1px 1px 0 1px #a9bfee"><div style="left:3px;top:7px;width:7px;height:8px;background:repeating-linear-gradient(180deg,#eef3fe 0,#eef3fe 1px,#8cb0f8 1px,#8cb0f8 2px)"></div></div>
<div class="trackh" style="left:747px;top:286px;width:193px;height:18px;"></div>
<div style="left:748.5px;top:288px;width:13.5px;height:13px;border-radius:2px;background:linear-gradient(135deg,#cbd8fe,#b3c6f7);box-shadow:0 0 0 1px #fff,1px 1px 0 1px #a9bfee"><svg style="left:2.5px;top:2px" width="7" height="9" viewBox="0 0 7 9"><path d="M5.5 0.8 L1.8 4.5 L5.5 8.2" fill="none" stroke="#4d6185" stroke-width="2.3"/></svg></div>
<div style="left:923.5px;top:288px;width:13.5px;height:13px;border-radius:2px;background:linear-gradient(135deg,#cbd8fe,#b3c6f7);box-shadow:0 0 0 1px #fff,1px 1px 0 1px #a9bfee"><svg style="left:4.5px;top:2px" width="7" height="9" viewBox="0 0 7 9"><path d="M1.5 0.8 L5.2 4.5 L1.5 8.2" fill="none" stroke="#4d6185" stroke-width="2.3"/></svg></div>
<div style="left:766px;top:288px;width:85px;height:13px;border-radius:2px;background:linear-gradient(180deg,#cbd8fe,#b3c6f7);box-shadow:0 0 0 1px #fff,1px 1px 0 1px #a9bfee"><div style="left:38px;top:3px;width:8px;height:7px;background:repeating-linear-gradient(90deg,#eef3fe 0,#eef3fe 1px,#8cb0f8 1px,#8cb0f8 2px)"></div></div>
<div style="left:940px;top:286px;width:18px;height:18px;background:#ece9d8"></div>
<div style="left:747px;top:304px;width:211px;height:20px;background:#ece9d8;border-top:1px solid #8fa5c4"></div>
<div style="left:748px;top:308px;width:80px;height:14px;font-family:'Liberation Serif',serif;font-size:12px;line-height:14px;color:#000;white-space:pre">
<span style="left:-0.67px;top:0;width:7.34px;transform:scaleX(0.858);transform-origin:50% 50%;">L</span>
<span style="left:7.33px;top:0;width:3.34px;">i</span>
<span style="left:12.00px;top:0;width:6px;">n</span>
<span style="left:18.34px;top:0;width:5.33px;">e</span>
<span style="left:30.00px;top:0;width:6px;">1</span>
<span style="left:42.00px;top:0;width:6px;">o</span>
<span style="left:49.00px;top:0;width:4px;">f</span>
<span style="left:60.00px;top:0;width:6px;">5</span>
<span style="left:66.00px;top:0;width:6px;">2</span>
</div>
<div style="left:946px;top:311px;width:14px;height:14px;"><svg style="right:1px;bottom:1px" width="12" height="12" viewBox="0 0 12 12"><g fill="#b8b4a2"><rect x="8" y="0" width="2" height="2"/><rect x="4" y="4" width="2" height="2"/><rect x="8" y="4" width="2" height="2"/><rect x="0" y="8" width="2" height="2"/><rect x="4" y="8" width="2" height="2"/><rect x="8" y="8" width="2" height="2"/></g><g fill="#fff"><rect x="9" y="1" width="2" height="2"/><rect x="5" y="5" width="2" height="2"/><rect x="9" y="5" width="2" height="2"/><rect x="1" y="9" width="2" height="2"/><rect x="5" y="9" width="2" height="2"/><rect x="9" y="9" width="2" height="2"/></g><g fill="#b8b4a2"><rect x="8" y="0" width="2" height="2"/><rect x="4" y="4" width="2" height="2"/><rect x="8" y="4" width="2" height="2"/><rect x="0" y="8" width="2" height="2"/><rect x="4" y="8" width="2" height="2"/><rect x="8" y="8" width="2" height="2"/></g></svg></div>
<div style="left:746px;top:358px;width:213px;height:223px;background:#6f94bc"></div>
<div style="left:747px;top:359px;width:211px;height:221px;background:#fff"></div>
<div class="tbtn" style="left:890px;top:334px;width:21px;height:21px;background:radial-gradient(circle at 30% 25%,#7d9ff0 0%,#5c80e0 60%,#5070d0 100%)"><div style="left:5px;top:13px;width:8px;height:3px;background:#fff"></div></div>
<div class="tbtn" style="left:913px;top:334px;width:21px;height:21px;background:radial-gradient(circle at 30% 25%,#7d9ff0 0%,#5c80e0 60%,#5070d0 100%)"><div style="left:4px;top:4px;width:11px;height:11px;border:1px solid #fff;border-top-width:3px"></div></div>
<div class="tbtn" style="left:936px;top:334px;width:21px;height:21px;background:radial-gradient(circle at 30% 25%,#d8a0b0 0%,#c06878 55%,#b05868 100%)"><svg style="left:4px;top:4px" width="11" height="11" viewBox="0 0 11 11"><path d="M1 1 L10 10 M10 1 L1 10" stroke="#fff" stroke-width="2.2" fill="none"/></svg></div>
<div style="left:768px;top:335px;width:112px;height:18px;font-family:'Liberation Serif',serif;font-weight:bold;font-size:15px;line-height:18px;color:#d8e4f8;white-space:pre">
<span style="left:-0.17px;top:0;width:8.34px;">S</span>
<span style="left:9.50px;top:0;width:5px;">t</span>
<span style="left:16.66px;top:0;width:6.67px;">r</span>
<span style="left:25.91px;top:0;width:4.17px;">i</span>
<span style="left:31.83px;top:0;width:8.34px;">n</span>
<span style="left:40.25px;top:0;width:7.5px;">g</span>
<span style="left:49.08px;top:0;width:5.84px;">s</span>
<span style="left:62.58px;top:0;width:10.84px;transform:scaleX(0.793);transform-origin:50% 50%;">w</span>
<span style="left:73.92px;top:0;width:4.17px;">i</span>
<span style="left:79.83px;top:0;width:8.34px;">n</span>
<span style="left:87.83px;top:0;width:8.34px;">d</span>
<span style="left:96.25px;top:0;width:7.5px;">o</span>
<span style="left:102.58px;top:0;width:10.84px;transform:scaleX(0.793);transform-origin:50% 50%;">w</span>
</div>
<svg style="left:749px;top:341px" width="15" height="7" viewBox="0 0 15 7"><g fill="#00a000"><rect x="0" y="0" width="1" height="3"/><rect x="2" y="0" width="1" height="3"/><rect x="10" y="0" width="1" height="3"/><rect x="12" y="0" width="1" height="3"/><rect x="3" y="5" width="1" height="1.3"/><rect x="5" y="5" width="1" height="1.3"/><rect x="7" y="5" width="1" height="1.3"/><rect x="9" y="5" width="1" height="1.3"/></g></svg>
<div style="left:747px;top:360px;width:194px;height:20px;background:linear-gradient(180deg,#ece9d8 0,#ece9d8 85%,#e0dccb 85%,#e0dccb 90%,#d2cebd 90%,#d2cebd 95%,#c6c2b1 95%)"><span class="hd" style="left:9px;top:0">Address</span><span class="hd" style="left:83px;top:0">Length</span><span class="hd" style="left:157px;top:0">T...</span><div style="left:72px;top:3px;width:1px;height:14px;background:#aca899"></div><div style="left:73px;top:3px;width:1px;height:14px;background:#fff"></div><div style="left:145px;top:3px;width:1px;height:14px;background:#aca899"></div><div style="left:146px;top:3px;width:1px;height:14px;background:#fff"></div><div style="left:182px;top:3px;width:1px;height:14px;background:#aca899"></div><div style="left:183px;top:3px;width:1px;height:14px;background:#fff"></div></div>
<div style="left:747px;top:380px;width:193px;height:162px;overflow:hidden">
<svg style="left:6px;top:5px" width="15" height="7" viewBox="0 0 15 7"><g fill="#00a000"><rect x="0" y="0" width="1" height="3"/><rect x="2" y="0" width="1" height="3"/><rect x="10" y="0" width="1" height="3"/><rect x="12" y="0" width="1" height="3"/><rect x="3" y="5" width="1" height="1.3"/><rect x="5" y="5" width="1" height="1.3"/><rect x="7" y="5" width="1" height="1.3"/><rect x="9" y="5" width="1" height="1.3"/></g></svg>
<span class="lst" style="left:23px;top:0px">.rdata:0...</span>
<span class="lst" style="left:81px;top:0px">00000024</span>
<span class="lst" style="left:153px;top:0px">C</span>
<span class="lst" style="left:190px;top:0px">I</span>
<svg style="left:6px;top:22px" width="15" height="7" viewBox="0 0 15 7"><g fill="#00a000"><rect x="0" y="0" width="1" height="3"/><rect x="2" y="0" width="1" height="3"/><rect x="10" y="0" width="1" height="3"/><rect x="12" y="0" width="1" height="3"/><rect x="3" y="5" width="1" height="1.3"/><rect x="5" y="5" width="1" height="1.3"/><rect x="7" y="5" width="1" height="1.3"/><rect x="9" y="5" width="1" height="1.3"/></g></svg>
<span class="lst" style="left:23px;top:17px">.rdata:0...</span>
<span class="lst" style="left:81px;top:17px">00000012</span>
<span class="lst" style="left:153px;top:17px">C</span>
<span class="lst" style="left:190px;top:17px">I</span>
<svg style="left:6px;top:39px" width="15" height="7" viewBox="0 0 15 7"><g fill="#00a000"><rect x="0" y="0" width="1" height="3"/><rect x="2" y="0" width="1" height="3"/><rect x="10" y="0" width="1" height="3"/><rect x="12" y="0" width="1" height="3"/><rect x="3" y="5" width="1" height="1.3"/><rect x="5" y="5" width="1" height="1.3"/><rect x="7" y="5" width="1" height="1.3"/><rect x="9" y="5" width="1" height="1.3"/></g></svg>
<span class="lst" style="left:23px;top:34px">.rdata:0...</span>
<span class="lst" style="left:81px;top:34px">0000001B</span>
<span class="lst" style="left:153px;top:34px">C</span>
<span class="lst" style="left:190px;top:34px">F</span>
<svg style="left:6px;top:56px" width="15" height="7" viewBox="0 0 15 7"><g fill="#00a000"><rect x="0" y="0" width="1" height="3"/><rect x="2" y="0" width="1" height="3"/><rect x="10" y="0" width="1" height="3"/><rect x="12" y="0" width="1" height="3"/><rect x="3" y="5" width="1" height="1.3"/><rect x="5" y="5" width="1" height="1.3"/><rect x="7" y="5" width="1" height="1.3"/><rect x="9" y="5" width="1" height="1.3"/></g></svg>
<span class="lst" style="left:23px;top:51px">.rdata:0...</span>
<span class="lst" style="left:81px;top:51px">00000039</span>
<span class="lst" style="left:153px;top:51px">C</span>
<span class="lst" style="left:190px;top:51px">\</span>
<svg style="left:6px;top:73px" width="15" height="7" viewBox="0 0 15 7"><g fill="#00a000"><rect x="0" y="0" width="1" height="3"/><rect x="2" y="0" width="1" height="3"/><rect x="10" y="0" width="1" height="3"/><rect x="12" y="0" width="1" height="3"/><rect x="3" y="5" width="1" height="1.3"/><rect x="5" y="5" width="1" height="1.3"/><rect x="7" y="5" width="1" height="1.3"/><rect x="9" y="5" width="1" height="1.3"/></g></svg>
<span class="lst" style="left:23px;top:68px">.rdata:0...</span>
<span class="lst" style="left:81px;top:68px">00000075</span>
<span class="lst" style="left:153px;top:68px">C</span>
<span class="lst" style="left:190px;top:68px">/</span>
<svg style="left:6px;top:90px" width="15" height="7" viewBox="0 0 15 7"><g fill="#00a000"><rect x="0" y="0" width="1" height="3"/><rect x="2" y="0" width="1" height="3"/><rect x="10" y="0" width="1" height="3"/><rect x="12" y="0" width="1" height="3"/><rect x="3" y="5" width="1" height="1.3"/><rect x="5" y="5" width="1" height="1.3"/><rect x="7" y="5" width="1" height="1.3"/><rect x="9" y="5" width="1" height="1.3"/></g></svg>
<span class="lst" style="left:23px;top:85px">.rdata:0...</span>
<span class="lst" style="left:81px;top:85px">0000002D</span>
<span class="lst" style="left:153px;top:85px">C</span>
<span class="lst" style="left:190px;top:85px">v</span>
<svg style="left:6px;top:107px" width="15" height="7" viewBox="0 0 15 7"><g fill="#00a000"><rect x="0" y="0" width="1" height="3"/><rect x="2" y="0" width="1" height="3"/><rect x="10" y="0" width="1" height="3"/><rect x="12" y="0" width="1" height="3"/><rect x="3" y="5" width="1" height="1.3"/><rect x="5" y="5" width="1" height="1.3"/><rect x="7" y="5" width="1" height="1.3"/><rect x="9" y="5" width="1" height="1.3"/></g></svg>
<span class="lst" style="left:23px;top:102px">.rdata:0...</span>
<span class="lst" style="left:81px;top:102px">00000027</span>
<span class="lst" style="left:153px;top:102px">C</span>
<span class="lst" style="left:190px;top:102px">(</span>
<svg style="left:6px;top:124px" width="15" height="7" viewBox="0 0 15 7"><g fill="#00a000"><rect x="0" y="0" width="1" height="3"/><rect x="2" y="0" width="1" height="3"/><rect x="10" y="0" width="1" height="3"/><rect x="12" y="0" width="1" height="3"/><rect x="3" y="5" width="1" height="1.3"/><rect x="5" y="5" width="1" height="1.3"/><rect x="7" y="5" width="1" height="1.3"/><rect x="9" y="5" width="1" height="1.3"/></g></svg>
<span class="lst" style="left:23px;top:119px">.stabstr:...</span>
<span class="lst" style="left:81px;top:119px">00000007</span>
<span class="lst" style="left:153px;top:119px">C</span>
<span class="lst" style="left:190px;top:119px">c</span>
<svg style="left:6px;top:141px" width="15" height="7" viewBox="0 0 15 7"><g fill="#00a000"><rect x="0" y="0" width="1" height="3"/><rect x="2" y="0" width="1" height="3"/><rect x="10" y="0" width="1" height="3"/><rect x="12" y="0" width="1" height="3"/><rect x="3" y="5" width="1" height="1.3"/><rect x="5" y="5" width="1" height="1.3"/><rect x="7" y="5" width="1" height="1.3"/><rect x="9" y="5" width="1" height="1.3"/></g></svg>
<span class="lst" style="left:23px;top:136px">.stabstr:...</span>
<span class="lst" style="left:81px;top:136px">00000046</span>
<span class="lst" style="left:153px;top:136px">C</span>
<span class="lst" style="left:190px;top:136px">/</span>
<svg style="left:6px;top:158px" width="15" height="7" viewBox="0 0 15 7"><g fill="#00a000"><rect x="0" y="0" width="1" height="3"/><rect x="2" y="0" width="1" height="3"/><rect x="10" y="0" width="1" height="3"/><rect x="12" y="0" width="1" height="3"/><rect x="3" y="5" width="1" height="1.3"/><rect x="5" y="5" width="1" height="1.3"/><rect x="7" y="5" width="1" height="1.3"/><rect x="9" y="5" width="1" height="1.3"/></g></svg>
<span class="lst" style="left:23px;top:153px">.stabstr:...</span>
<span class="lst" style="left:81px;top:153px">0000004B</span>
<span class="lst" style="left:153px;top:153px">C</span>
<span class="lst" style="left:190px;top:153px">/</span>
</div>
<div class="trackv" style="left:940px;top:360px;width:18px;height:183px;"></div>
<div style="left:942px;top:362px;width:13px;height:13.5px;border-radius:2px;background:linear-gradient(135deg,#cbd8fe,#b3c6f7);box-shadow:0 0 0 1px #fff,1px 1px 0 1px #a9bfee"><svg style="left:2px;top:4.5px" width="9" height="7" viewBox="0 0 9 7"><path d="M0.8 5.5 L4.5 1.8 L8.2 5.5" fill="none" stroke="#4d6185" stroke-width="2.3"/></svg></div>
<div style="left:942px;top:526px;width:13px;height:13.5px;border-radius:2px;background:linear-gradient(135deg,#cbd8fe,#b3c6f7);box-shadow:0 0 0 1px #fff,1px 1px 0 1px #a9bfee"><svg style="left:2px;top:3.5px" width="9" height="7" viewBox="0 0 9 7"><path d="M0.8 1.5 L4.5 5.2 L8.2 1.5" fill="none" stroke="#4d6185" stroke-width="2.3"/></svg></div>
<div style="left:942px;top:378px;width:13px;height:6px;border-radius:2px;background:linear-gradient(90deg,#cbd8fe,#b3c6f7);box-shadow:0 0 0 1px #fff,1px 1px 0 1px #a9bfee"></div>
<div class="trackh" style="left:747px;top:542px;width:193px;height:18px;"></div>
<div style="left:748.5px;top:544px;width:13.5px;height:13px;border-radius:2px;background:linear-gradient(135deg,#cbd8fe,#b3c6f7);box-shadow:0 0 0 1px #fff,1px 1px 0 1px #a9bfee"><svg style="left:2.5px;top:2px" width="7" height="9" viewBox="0 0 7 9"><path d="M5.5 0.8 L1.8 4.5 L5.5 8.2" fill="none" stroke="#4d6185" stroke-width="2.3"/></svg></div>
<div style="left:923.5px;top:544px;width:13.5px;height:13px;border-radius:2px;background:linear-gradient(135deg,#cbd8fe,#b3c6f7);box-shadow:0 0 0 1px #fff,1px 1px 0 1px #a9bfee"><svg style="left:4.5px;top:2px" width="7" height="9" viewBox="0 0 7 9"><path d="M1.5 0.8 L5.2 4.5 L1.5 8.2" fill="none" stroke="#4d6185" stroke-width="2.3"/></svg></div>
<div style="left:766px;top:544px;width:52px;height:13px;border-radius:2px;background:linear-gradient(180deg,#cbd8fe,#b3c6f7);box-shadow:0 0 0 1px #fff,1px 1px 0 1px #a9bfee"><div style="left:22px;top:3px;width:8px;height:7px;background:repeating-linear-gradient(90deg,#eef3fe 0,#eef3fe 1px,#8cb0f8 1px,#8cb0f8 2px)"></div></div>
<div style="left:940px;top:542px;width:18px;height:18px;background:#ece9d8"></div>
<div style="left:747px;top:560px;width:211px;height:20px;background:#ece9d8;border-top:1px solid #8fa5c4"></div>
<div style="left:946px;top:567px;width:14px;height:14px;"><svg style="right:1px;bottom:1px" width="12" height="12" viewBox="0 0 12 12"><g fill="#b8b4a2"><rect x="8" y="0" width="2" height="2"/><rect x="4" y="4" width="2" height="2"/><rect x="8" y="4" width="2" height="2"/><rect x="0" y="8" width="2" height="2"/><rect x="4" y="8" width="2" height="2"/><rect x="8" y="8" width="2" height="2"/></g><g fill="#fff"><rect x="9" y="1" width="2" height="2"/><rect x="5" y="5" width="2" height="2"/><rect x="9" y="5" width="2" height="2"/><rect x="1" y="9" width="2" height="2"/><rect x="5" y="9" width="2" height="2"/><rect x="9" y="9" width="2" height="2"/></g><g fill="#b8b4a2"><rect x="8" y="0" width="2" height="2"/><rect x="4" y="4" width="2" height="2"/><rect x="8" y="4" width="2" height="2"/><rect x="0" y="8" width="2" height="2"/><rect x="4" y="8" width="2" height="2"/><rect x="8" y="8" width="2" height="2"/></g></svg></div>
<div style="left:19px;top:584px;width:952px;height:7px;background:#ece9d8"></div>
<div style="left:19px;top:584px;width:160px;height:7px;background:linear-gradient(180deg,#7b99e1,#8eaeee);border-radius:0 0 6px 6px"></div>
<div style="left:108px;top:584px;width:18px;height:2px;background:#9db6f0;border-radius:0 0 2px 2px"></div>
<div style="left:130px;top:584px;width:18px;height:2px;background:#9db6f0;border-radius:0 0 2px 2px"></div>
<div style="left:153px;top:584px;width:19px;height:2px;background:#c4788c;border-radius:0 0 2px 2px"></div>
<div style="left:179px;top:584px;width:160px;height:7px;background:linear-gradient(180deg,#7b99e1,#8eaeee);border-radius:0 0 6px 6px"></div>
<div style="left:268px;top:584px;width:18px;height:2px;background:#9db6f0;border-radius:0 0 2px 2px"></div>
<div style="left:290px;top:584px;width:18px;height:2px;background:#9db6f0;border-radius:0 0 2px 2px"></div>
<div style="left:313px;top:584px;width:19px;height:2px;background:#c4788c;border-radius:0 0 2px 2px"></div>
<div style="left:339px;top:584px;width:160px;height:7px;background:linear-gradient(180deg,#7b99e1,#8eaeee);border-radius:0 0 6px 6px"></div>
<div style="left:428px;top:584px;width:18px;height:2px;background:#9db6f0;border-radius:0 0 2px 2px"></div>
<div style="left:450px;top:584px;width:18px;height:2px;background:#9db6f0;border-radius:0 0 2px 2px"></div>
<div style="left:473px;top:584px;width:19px;height:2px;background:#c4788c;border-radius:0 0 2px 2px"></div>
<div style="left:499px;top:584px;width:160px;height:7px;background:linear-gradient(180deg,#7b99e1,#8eaeee);border-radius:0 0 6px 6px"></div>
<div style="left:588px;top:584px;width:18px;height:2px;background:#9db6f0;border-radius:0 0 2px 2px"></div>
<div style="left:610px;top:584px;width:18px;height:2px;background:#9db6f0;border-radius:0 0 2px 2px"></div>
<div style="left:633px;top:584px;width:19px;height:2px;background:#c4788c;border-radius:0 0 2px 2px"></div>
<div style="left:659px;top:584px;width:160px;height:7px;background:linear-gradient(180deg,#7b99e1,#8eaeee);border-radius:0 0 6px 6px"></div>
<div style="left:748px;top:584px;width:18px;height:2px;background:#9db6f0;border-radius:0 0 2px 2px"></div>
<div style="left:770px;top:584px;width:18px;height:2px;background:#9db6f0;border-radius:0 0 2px 2px"></div>
<div style="left:793px;top:584px;width:19px;height:2px;background:#c4788c;border-radius:0 0 2px 2px"></div>
<div style="left:17px;top:591px;width:955px;height:1px;background:#fff"></div>
<div style="left:17px;top:596px;width:955px;height:53px;background:#fff;border-top:1px solid #7f9db9;border-left:1px solid #7f9db9"></div>
<span class="out" style="left:21px;top:598px">File 'C:\Documents and Settings\Administrator\</span>
<span class="out" style="left:21px;top:609px">Compiling file 'C:\Disassemble\IDA Free\idc\ida.idc'...</span>
<span class="out" style="left:21px;top:620px">Executing function 'main'...</span>
<span class="out" style="left:21px;top:631px">Compiling file 'C:\Disassemble\IDA Free\idc\onload.idc'...</span>
<span class="out" style="left:21px;top:642px">Executing function 'OnLoad'...</span>
<span class="out" style="left:371px;top:598px">\crackme1.exe' is successfully loaded into the database.</span>
<svg style="left:345px;top:598px" width="10" height="10" viewBox="0 0 10 10"><path d="M4.5 0 V2 M4.5 0.8 H8 M2 2.5 H8 V5.5 H2 Z M2 4 H8 M0 6.8 H10 M5 5.5 V10 M5 7 L1 9.8 M5 7 L9 9.8" stroke="#000" stroke-width="1" fill="none"/></svg>
<svg style="left:359px;top:598px" width="11" height="10" viewBox="0 0 11 10"><path d="M0 0.5 H11 M5.5 0.5 V2.5 M1.5 2.5 H9.5 V9.5 H1.5 Z M4 2.5 V9.5 M7 2.5 V9.5 M4 5 H7 M4 7.2 H7" stroke="#000" stroke-width="1" fill="none"/></svg>
<div class="trackv" style="left:955px;top:597px;width:17px;height:52px;"></div>
<div style="left:956.5px;top:599px;width:13px;height:13.5px;border-radius:2px;background:linear-gradient(135deg,#cbd8fe,#b3c6f7);box-shadow:0 0 0 1px #fff,1px 1px 0 1px #a9bfee"><svg style="left:2px;top:4.5px" width="9" height="7" viewBox="0 0 9 7"><path d="M0.8 5.5 L4.5 1.8 L8.2 5.5" fill="none" stroke="#4d6185" stroke-width="2.3"/></svg></div>
<svg style="left:0;top:0" width="810" height="14" viewBox="0 0 810 14"><rect x="21" y="0" width="1" height="12" fill="#fff"/><rect x="22" y="0" width="1" height="12" fill="#b4b09c"/><path d="M35.0 0 L34.3 9.5 M41.099999999999994 0 L43.3 9.5 M35.3 1.5 L42.8 8.5 M42.3 3 Q39.3 8 34.3 9.3" stroke="#000" stroke-width="1.3" fill="none"/><rect x="33.5" y="8.5" width="1.8" height="1.8"/><rect x="42.5" y="8.5" width="1.8" height="1.8"/><text x="53.5" y="6.3" font-family="Liberation Serif" font-weight="bold" font-size="13" fill="#009a00">En</text><rect x="75" y="0" width="1" height="13" fill="#c5c2b2"/><rect x="76" y="0" width="1" height="13" fill="#fff"/><rect x="80" y="0" width="1" height="12" fill="#fff"/><rect x="81" y="0" width="1" height="12" fill="#b4b09c"/><text x="89" y="9.3" font-family="Liberation Sans" font-size="8.2" fill="#000" textLength="17">COD</text><text x="113.5" y="9.3" font-family="Liberation Sans" font-size="8.2" fill="#000" textLength="16">DAT</text><path d="M90 0 h2 M94 0 h4 M100 0 h2 M114 0 h2 M118 0 h4 M124 0 h2" stroke="#000" stroke-width="1.6"/><path d="M139.7 0 L139.0 9.5 M145.8 0 L148.0 9.5 M140.0 1.5 L147.5 8.5 M147.0 3 Q144.0 8 139.0 9.3" stroke="#000" stroke-width="1.3" fill="none"/><rect x="138.2" y="8.5" width="1.8" height="1.8"/><rect x="147.2" y="8.5" width="1.8" height="1.8"/><text x="166.5" y="6.5" font-family="Liberation Sans" font-size="9" fill="#00a000">s</text><path d="M164 0 v1.5 M165.5 0 v1.5 M174 0 v1.5 M175.5 0 v1.5" stroke="#00a000" stroke-width="0.9"/><path d="M182 0 H188 L185 3.5 Z" fill="#000"/><path d="M200 1 H209 M201.5 -2 L207.5 4.5 M207.5 -2 L201.5 4.5 M204.5 -2 V5" stroke="#000" stroke-width="1.7"/><path d="M222 -4 H225.3 L227.7 3 V-4 H231 V9 H227.7 L225.3 2.5 V9 H222 Z" fill="#009a00"/><path d="M254 -1.5 L245.5 8.8" stroke="#000" stroke-width="2.6" fill="none"/><path d="M248 -2 L256.5 9" stroke="#000" stroke-width="1.2" fill="none"/><rect x="262" y="0" width="1" height="13" fill="#c5c2b2"/><rect x="263" y="0" width="1" height="13" fill="#fff"/><rect x="267" y="0" width="1" height="12" fill="#fff"/><rect x="268" y="0" width="1" height="12" fill="#b4b09c"/><text x="279.5" y="9.6" font-family="Liberation Sans" font-weight="bold" font-size="9" fill="#000" textLength="14">dat</text><text x="280" y="1.5" font-family="Liberation Sans" font-weight="bold" font-size="9" fill="#000" textLength="13">off</text><path d="M300 0 H306 L303 3.5 Z" fill="#000"/><path d="M321.5 -3 V8.5 M326 -3 V8.5 M319.5 1 H328 M319.5 4.5 H328" stroke="#0000ff" stroke-width="2" fill="none"/><path d="M336 0 H342 L339 3.5 Z" fill="#000"/><text x="353.5" y="8" font-family="Liberation Sans" font-weight="bold" font-size="10" fill="#00a000">x</text><path d="M352 0 l2 2 M362 0 l-2 2" stroke="#00a000" stroke-width="1"/><text x="375.5" y="9.5" font-family="Liberation Sans" font-weight="bold" font-size="17" fill="#000">S</text><path d="M400 -4 H403 V2 H406.5 V-4 H409.5 V8.5 H406.5 V4.5 H403 V8.5 H400 Z" fill="#009a00"/><path d="M423 -4 H426 V1.5 L429.5 -4 H432.5 L428.5 1.5 L432.5 8.5 H429.5 L426 3 V8.5 H423 Z" fill="#009a00"/><path d="M446 0 L443.5 6.5 M457.5 0 L455 6.5 M447 2 H455" stroke="#000" stroke-width="1.2" fill="none"/><path d="M468 1 q2 -2 4 0 t4 0" stroke="#0000ff" stroke-width="1.6" fill="none"/><path d="M500 -1 L494 7" stroke="#000" stroke-width="3.6"/><path d="M500 -1 L495.5 5" stroke="#e8e000" stroke-width="1.3"/><path d="M500.8 0 L496.5 5.6" stroke="#e000e0" stroke-width="0.9"/><path d="M492.5 9.5 L493 6 L496 8 Z" fill="#000"/><rect x="508" y="0" width="1" height="13" fill="#c5c2b2"/><rect x="509" y="0" width="1" height="13" fill="#fff"/><rect x="513" y="0" width="1" height="12" fill="#fff"/><rect x="514" y="0" width="1" height="12" fill="#b4b09c"/><rect x="531" y="0" width="3" height="1.5" fill="#000"/><rect x="531" y="4" width="3" height="2.3" fill="#000"/><rect x="554.5" y="0" width="3" height="1.5" fill="#000"/><path d="M554.5 4 h3 v2.5 l-2 1.8 h-1 l1 -2 h-1 z" fill="#000"/><path d="M571 2.2 h12 M571 6.5 h12" stroke="#0000e0" stroke-width="2.4" stroke-dasharray="1.3 0.7 2 0.6"/><path d="M594 0.8 h12" stroke="#0000e0" stroke-width="2.4" stroke-dasharray="1.3 0.7 2 0.6"/><path d="M593.5 6.3 H604 M601 3.5 L605 6.3 L601 9" stroke="#000" stroke-width="1.3" fill="none"/><rect x="613" y="0" width="1" height="13" fill="#c5c2b2"/><rect x="614" y="0" width="1" height="13" fill="#fff"/><rect x="620" y="0" width="1" height="12" fill="#fff"/><rect x="621" y="0" width="1" height="12" fill="#b4b09c"/><path d="M633.5 0 V5 L636.5 7.5 M640 0 V7 M644 0 V5 M638 7.5 h3 M640 5.5 l-2 -2 M640 5.5 l2 -2 M641.5 6 H647.5 M641.5 8 H647.5" stroke="#000" stroke-width="1.2" fill="none"/><path d="M657 0 l2 2" stroke="#000" stroke-width="1.3"/><path d="M661 -1 V3.5 M659.5 1.5 H663" stroke="#ff0000" stroke-width="1.4"/><path d="M662 2 H669 V8 M663.5 2 V8 M661.5 6 l2 2.5 l2 -2.5 M667 6 l2 2.5 l2 -2.5" stroke="#000" stroke-width="1.2" fill="none"/><rect x="676" y="0" width="1" height="13" fill="#c5c2b2"/><rect x="677" y="0" width="1" height="13" fill="#fff"/><rect x="684" y="0" width="1" height="12" fill="#fff"/><rect x="685" y="0" width="1" height="12" fill="#b4b09c"/><g fill="#0000ff"><rect x="697" y="1" width="5" height="3"/><rect x="703" y="1" width="5" height="3"/><rect x="699" y="0" width="1.3" height="1.2"/><rect x="705" y="0" width="1.3" height="1.2"/><rect x="696.5" y="4" width="1.2" height="1.5"/><rect x="701.5" y="4" width="1.2" height="1.5"/><rect x="706.5" y="4" width="1.2" height="1.5"/><rect x="695" y="5.3" width="4" height="3.7"/><rect x="700" y="5.3" width="4" height="3.7"/><rect x="705" y="5.3" width="4" height="3.7"/></g><g fill="#ff0000"><rect x="721" y="0" width="5" height="2.2"/><rect x="727" y="0" width="5" height="2.2"/><rect x="723" y="2" width="1.2" height="2"/><rect x="729" y="2" width="1.2" height="2"/><rect x="719" y="3.8" width="4" height="2.4"/><rect x="724.3" y="3.8" width="4" height="2.4"/><rect x="729.5" y="3.8" width="4" height="2.4"/><path d="M718 9 l2.2 -2.5 l2.2 2.5 Z M722.5 9 l2.2 -2.5 l2.2 2.5 Z M726.8 9 l2.2 -2.5 l2.2 2.5 Z M731 9 l2.2 -2.5 l2.2 2.5 Z"/><rect x="720.5" y="6" width="1" height="1.5"/><rect x="725.8" y="6" width="1" height="1.5"/><rect x="731" y="6" width="1" height="1.5"/></g><g fill="#a8a69a"><rect x="745" y="0" width="3" height="2"/><rect x="754" y="0" width="3" height="2"/><rect x="746" y="1.5" width="10" height="2.5"/><rect x="749.5" y="3" width="3.5" height="5"/><rect x="748" y="7" width="6.5" height="1.8"/></g><g fill="#a8a69a"><rect x="766.5" y="0" width="5" height="2.2"/><rect x="772.5" y="0" width="5" height="2.2"/><rect x="768.5" y="2" width="1.2" height="2"/><rect x="774.5" y="2" width="1.2" height="2"/><rect x="764.5" y="3.8" width="4" height="2.4"/><rect x="769.8" y="3.8" width="4" height="2.4"/><rect x="775.0" y="3.8" width="4" height="2.4"/><path d="M763.5 9 l2.2 -2.5 l2.2 2.5 Z M768.0 9 l2.2 -2.5 l2.2 2.5 Z M772.3 9 l2.2 -2.5 l2.2 2.5 Z M776.5 9 l2.2 -2.5 l2.2 2.5 Z"/><rect x="766.0" y="6" width="1" height="1.5"/><rect x="771.3" y="6" width="1" height="1.5"/><rect x="776.5" y="6" width="1" height="1.5"/></g><g fill="#ff0000"><rect x="789.5" y="0" width="5" height="2.2"/><rect x="795.5" y="0" width="5" height="2.2"/><rect x="791.5" y="2" width="1.2" height="2"/><rect x="797.5" y="2" width="1.2" height="2"/><rect x="787.5" y="3.8" width="4" height="2.4"/><rect x="792.8" y="3.8" width="4" height="2.4"/><rect x="798.0" y="3.8" width="4" height="2.4"/><path d="M786.5 9 l2.2 -2.5 l2.2 2.5 Z M791.0 9 l2.2 -2.5 l2.2 2.5 Z M795.3 9 l2.2 -2.5 l2.2 2.5 Z M799.5 9 l2.2 -2.5 l2.2 2.5 Z"/><rect x="789.0" y="6" width="1" height="1.5"/><rect x="794.3" y="6" width="1" height="1.5"/><rect x="799.5" y="6" width="1" height="1.5"/></g><path d="M794 1.5 L797 5 L803 -2" stroke="#000" stroke-width="1.8" fill="none"/></svg>
</div>
</body></html>
